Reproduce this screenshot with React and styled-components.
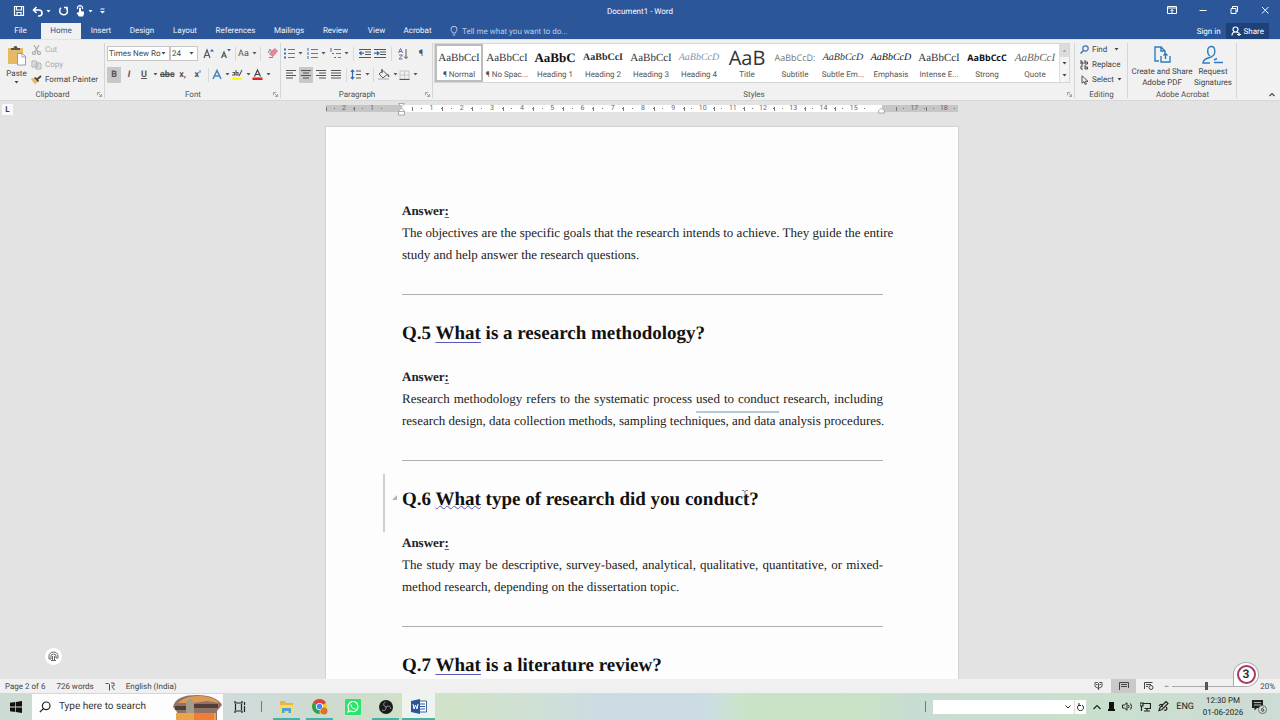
import React from "react";
import styled, { createGlobalStyle, css } from "styled-components";

const ui = 'Roboto, "Open Sans", sans-serif';

const Global = createGlobalStyle`
  * { box-sizing: border-box; }
  body { margin: 0; font-family: ${ui}; font-size: 8px; color: #444; background: #e3e3e3; text-rendering: geometricPrecision; }
  button, input, select { font: inherit; color: inherit; margin: 0; padding: 0; border: 0; background: none; text-rendering: inherit; }
  button { cursor: pointer; white-space: nowrap; }
  svg { display: block; flex: none; fill: none; stroke: currentColor; stroke-width: 1.2; }
  h1, h2, h3, p { margin: 0; }
`;

const Screen = styled.div`
  display: flex; flex-direction: column; height: 100vh; overflow: hidden;
`;

/* title bar and tabs */
const TitleBar = styled.header`
  display: grid; grid-template-columns: 1fr auto 1fr; align-items: center; height: 22px;
  background: #2b579a; color: #fff;
`;
const QuickAccess = styled.div`
  display: flex; align-items: center; gap: 7px; padding-left: 13px;
`;
const QuickButton = styled.button`
  display: flex; align-items: center; gap: 3px; height: 20px;
`;
const DocTitle = styled.h1`
  font-size: 8px; font-weight: 400; line-height: 20px; padding-top: 2px;
`;
const WindowControls = styled.div`
  display: flex; justify-content: flex-end; gap: 21px; padding-right: 10px; padding-bottom: 2px;
  button { display: flex; }
`;
const TabBar = styled.nav`
  display: flex; align-items: flex-end; height: 17px; background: #2b579a; color: #f0f4fa;
`;
const Tab = styled.button`
  height: 16px; width: ${(p) => p.$w}px; line-height: 16px;
  ${(p) => p.$active && css`background: #f1f1f1; color: #2b579a;`}
`;
const TellMe = styled.button`
  display: flex; align-items: center; gap: 4px; height: 16px; padding-left: 11px; color: #b9cae6;
`;
const Account = styled.div`
  display: flex; margin-left: auto; padding-right: 11px; gap: 5px;
`;
const AccountButton = styled.button`
  display: flex; align-items: center; gap: 3px; height: 16px; color: #fff;
  ${(p) => p.$filled && css`background: #1e4178; padding: 0 5px;`}
`;

/* ribbon */
const Ribbon = styled.section`
  display: flex; height: 62px; background: #f1f1f1; border-top: 1px solid #dfe5ee; padding-top: 2px;
  border-bottom: 1px solid #d8d8d8;
`;
const Group = styled.div`
  display: flex; flex-direction: column; position: relative;
  ${(p) => (p.$w ? `flex: none; width: ${p.$w}px;` : "flex: 1; min-width: 0;")}
  &::after { content: ""; position: absolute; right: 0; top: 1px; bottom: 2px; width: 1px; background: #d5d5d5; }
  &:last-child::after { display: none; }
`;
const GroupBody = styled.div`
  flex: 1; display: flex; flex-direction: ${(p) => (p.$column ? "column" : "row")}; min-height: 0;
  padding: ${(p) => (p.$column ? 1 : 0)}px ${(p) => p.$pad ?? 2}px 0;
`;
const GroupLabel = styled.div`
  display: flex; align-items: center; justify-content: center; height: 11px; color: #555;
`;
const Launcher = styled.button`
  position: absolute; right: 3px; bottom: 3px; z-index: 1; color: #777;
`;
const BigButton = styled.button`
  display: flex; flex-direction: column; align-items: center; line-height: 11px; gap: 2px; padding-top: 3px;
  width: ${(p) => p.$w}px; color: #444;
`;
const Stack = styled.div`
  display: flex; flex-direction: column;
`;
const SmallButton = styled.button`
  display: flex; align-items: center; gap: 3px; height: 15px; color: ${(p) => (p.$dim ? "#aaa" : "#444")};
`;
const ToolRow = styled.div`
  display: flex; align-items: center; height: 21px; gap: ${(p) => p.$gap ?? 4}px;
`;
const Tool = styled.button`
  display: flex; align-items: center; justify-content: center; gap: 3px; height: 16px; min-width: ${(p) => (p.$slim ? 7 : 14)}px;
  font-size: 9px; color: #555; font-weight: ${(p) => (p.$bold ? 700 : 400)};
  ${(p) => p.$on && css`background: #c8c8c8;`}
`;
const Divider = styled.span`
  width: 1px; height: 14px; background: #d8d8d8; flex: none; margin: 0 ${(p) => p.$m ?? 0}px;
`;
const FontBox = styled.label`
  display: flex; align-items: center; width: ${(p) => p.$w}px; height: 15px; background: #fff; border: 1px solid #c6c6c6;
  padding: 0 3px 0 1px;
  input { flex: 1; min-width: 0; width: 0; outline: 0; }
`;
const Gallery = styled.div`
  display: flex; flex: 1; min-width: 0; height: 40px; margin: 1px 4px 0 0; background: #fff; border: 1px solid #d6d6d6;
`;
const StyleCard = styled.button`
  flex: 1; min-width: 0; display: flex; flex-direction: column; align-items: center; justify-content: flex-end; overflow: hidden;
  padding-bottom: 1px; color: #555;
  outline: ${(p) => (p.$active ? "2px solid #bcbcbc" : "0")}; outline-offset: -2px;
`;
const Sample = styled.span`
  font: ${(p) => p.$font}; color: ${(p) => p.$color || "#333"}; line-height: 20px; height: 20px;
`;
const StyleName = styled.span`
  line-height: 13px;
`;
const GalleryScroll = styled.div`
  display: flex; flex-direction: column; width: 10px; background: #f4f4f4; border-left: 1px solid #ddd;
  button { flex: 1; display: flex; align-items: center; justify-content: center; }
  button:first-child { background: #dcdcdc; color: #aaa; }
`;
const Collapse = styled.button`
  margin: auto 5px 3px auto;
`;

/* ruler */
const RulerRow = styled.div`
  display: flex; justify-content: center; position: relative; height: 16px; padding: 4px 0 5px 4px; background: #e3e3e3; flex: none;
`;
const TabStop = styled.button`
  position: absolute; left: 2px; top: 3px; width: 11px; height: 11px; background: #fafafa; font-size: 8px; font-weight: 700; line-height: 8px;
`;
const RulerZone = styled.div`
  display: flex; width: ${(p) => p.$w}px; padding: ${(p) => p.$pad}; color: #666;
  background: ${(p) => (p.$margin ? "#c6c6c6" : "#fff")};
`;
const Centimetre = styled.div`
  flex: 1; display: flex; align-items: center; justify-content: space-between; font-size: 7px; line-height: 7px;
  &::before { content: ""; width: 1px; height: 4px; background: #777; }
`;
const Dot = styled.i`
  width: 1px; height: 1px; background: #777;
`;
const Indent = styled.span`
  position: relative; z-index: 1; width: 0;
  svg { position: absolute; left: -4px; top: -2px; }
`;

/* document */
const Workspace = styled.main`
  flex: 1; min-height: 0; overflow: hidden; position: relative; display: flex; justify-content: center;
  padding: 9px 0 0 4px; background: #e3e3e3;
`;
const Page = styled.article`
  width: 634px; height: max-content; padding: 73px 75px 80px 76px; background: #fdfdfd; border: 1px solid #d2d2d2; color: #222;
  font-family: "Liberation Serif", serif; font-size: 13px; line-height: 22px;
`;
const Question = styled.h2`
  position: relative; font-size: 19px; line-height: 24px; margin-bottom: 20px; color: #111;
`;
const Answer = styled.h3`
  font-size: 13px; line-height: 22px; font-weight: 700;
`;
const Line = styled.span`
  display: block; white-space: nowrap; text-align: justify; text-align-last: ${(p) => (p.$full ? "justify" : "left")};
`;
const Rule = styled.hr`
  height: 1px; margin: 28px 0 27px; border: 0; background: #b0b0b0;
`;
const Squiggle = styled.span`
  text-decoration: underline; text-decoration-color: #5a57b8; text-decoration-style: ${(p) => (p.$plain ? "solid" : "wavy")};
  text-decoration-thickness: 1px; text-underline-offset: ${(p) => (p.$plain ? 3 : 0)}px;
`;
const Hint = styled.span`
  text-decoration: underline 2px #b3c8dc; text-underline-offset: 8px;
`;
const Colon = styled.span`
  text-decoration: underline 1px #666; text-underline-offset: 2px;
`;
const HeadingMark = styled.span`
  position: absolute; left: -19px; top: -14px; height: 58px; border-left: 2px solid #cfcfcf;
  svg { position: absolute; left: 7px; top: 21px; fill: #b5b5b5; stroke: none; }
`;
const TextCursor = styled.span`
  position: absolute; left: 340px; top: 2px; color: #555;
`;
const Assistant = styled.button`
  position: absolute; left: 45px; bottom: 14px; width: 17px; height: 17px; border-radius: 50%; background: #fff;
  display: flex; align-items: center; justify-content: center; color: #666;
`;

/* status bar */
const StatusBar = styled.footer`
  position: relative; display: flex; align-items: center; height: 14px; flex: none; padding: 0 5px; background: #f0f0f0; gap: 11px;
`;
const Views = styled.div`
  display: flex; margin-left: auto;
`;
const ViewButton = styled.button`
  display: flex; align-items: center; justify-content: center; width: 25px; height: 14px;
  background: ${(p) => (p.$on ? "#c9c9c9" : "none")};
`;
const Zoom = styled.label`
  display: flex; align-items: center; gap: 3px; width: 111px; margin-left: -8px;
  input { appearance: none; width: 72px; height: 12px; background: linear-gradient(#aaa, #aaa) center / 100% 1px no-repeat; }
  input::-webkit-slider-thumb { appearance: none; width: 3px; height: 8px; background: #555; }
  output { margin-left: auto; }
`;
const Badge = styled.span`
  position: absolute; right: 21px; bottom: 6px; width: 26px; height: 25px; display: flex; align-items: center; justify-content: center;
  background: #fff; border-radius: 50% 50% 50% 0; border: 1px solid #aaa; z-index: 2;
  b { width: 19px; height: 19px; border: 2px solid #a43a62; border-radius: 50%; font-size: 12px; line-height: 15px; text-align: center; color: #333; }
`;

/* taskbar */
const Taskbar = styled.footer`
  display: flex; align-items: center; height: 27px; flex: none; color: #222;
  background: linear-gradient(90deg, #cedbd3 0, #d0dbdb 18%, #cddbd4 24%, #d0dfc9 30%, #d0e3c9 35%, #cfe0d5 42%, #ccdbe3 47%, #ccdce4 55%, #c9e3c8 58%, #c9e2c7 68%, #c8ddd2 71%, #c9e0cc 84%, #cddcd6 100%);
`;
const Start = styled.button`
  width: 32px; display: flex; justify-content: center; color: #111;
`;
const Search = styled.label`
  display: flex; align-items: center; width: 191px; height: 26px; padding-left: 7px; gap: 8px; background: #fdfdfd; font-size: 10px;
  input { flex: 1; min-width: 0; width: 0; outline: 0; }
  input::placeholder { color: #333; opacity: 1; }
`;
const AppButton = styled.button`
  position: relative; display: flex; align-items: center; justify-content: center; width: 33px; height: 27px;
  background: ${(p) => (p.$active ? "#eef3ee" : "none")};
  ${(p) => p.$open && css`
    &::after { content: ""; position: absolute; bottom: 0; left: ${p.$active ? 0 : 3}px; right: ${p.$active ? 0 : 3}px; height: 2px; background: #3fb5a5; }
  `}
`;
const Separator = styled.span`
  width: 1px; height: 11px; background: #777;
`;
const Apps = styled.div`
  display: flex; align-items: center; gap: 5px;
`;
const PinnedApps = styled.div`
  display: flex; padding-left: 3px;
`;
const Tray = styled.div`
  display: flex; align-items: center; margin-left: auto; gap: 7px; padding-right: 13px; font-size: 9px;
`;
const Address = styled.div`
  display: flex; width: 153px; height: 14px; background: #fff;
  input { flex: 1; min-width: 0; width: 0; }
  button { display: flex; align-items: center; justify-content: center; width: 12px; }
  button:last-child { border-left: 1px solid #ddd; }
`;
const Clock = styled.time`
  display: block; width: 44px; text-align: center; line-height: 12px; font-size: 8px; white-space: nowrap;
`;

const Caret = ({ up }) => (
  <svg width="5" height="3" viewBox="0 0 5 3">
    <path d={up ? "M.5 3L2.5 .5L4.500 3Z" : "M.5 0L2.5 2.500L4.500 0Z"} fill="currentColor" stroke="none" />
  </svg>
);
const LauncherIcon = () => (
  <svg width="5" height="5" viewBox="0 0 6 6"><path d="M.5 4V.5H4M2 2l3 3M5.500 2.500v3h-3" strokeWidth=".8" /></svg>
);
const Lines = ({ widths, align = "left" }) => (
  <svg width="10" height="9" viewBox="0 0 10 9">
    {widths.map((w, i) => {
      const x = align === "left" ? 0 : align === "right" ? 10 - w : (10 - w) / 2;
      return <path key={i} d={`M${x} ${i * 2.5 + 0.5}h${w}`} strokeWidth="1" />;
    })}
  </svg>
);
const ListIcon = ({ kind }) => (
  <svg width="11" height="11" viewBox="0 0 11 11">
    <path d={kind === 2 ? "M4 1.500h7M6 5.500h5M8 9.500h3" : "M4 1.500h7M4 5.500h7M4 9.500h7"} strokeWidth="1" stroke="#777" />
    <path d={kind === 2 ? "M0 1h2M2 5.500h2M4 9.500h2M1 2v2" : kind === 1 ? "M1 0v3M1 4v3M1 8v3" : "M0 1.500h2M0 5.500h2M0 9.500h2"} stroke="#3d6fb0" strokeWidth={kind ? 1 : 2} />
  </svg>
);
const IndentIcon = ({ right }) => (
  <svg width="12" height="9" viewBox="0 0 12 9">
    <path d="M0 .5h12M6 3h6M6 5.500h6M0 8.500h12" strokeWidth="1" />
    <path d={right ? "M0 4.200h4.500M3 2.500l2 1.700-2 1.800" : "M.5 4.200H5M2.500 2.500l-2 1.700 2 1.800"} stroke="#2b6cb5" />
  </svg>
);

const tabs = [["Home", 40], ["Insert", 40], ["Design", 42], ["Layout", 44], ["References", 57], ["Mailings", 50], ["Review", 43], ["View", 39], ["Acrobat", 43]];

const cards = [
  ["¶ Normal", '11px "Liberation Serif"', "AaBbCcI"],
  ["¶ No Spac...", '11px "Liberation Serif"', "AaBbCcI"],
  ["Heading 1", 'bold 13px "Liberation Serif"', "AaBbC", "#111"],
  ["Heading 2", 'bold 10px "Liberation Serif"', "AaBbCcI"],
  ["Heading 3", '11px "Liberation Serif"', "AaBbCcI"],
  ["Heading 4", 'italic 10px "Liberation Serif"', "AaBbCcD", "#8496b0"],
  ["Title", '20px "Open Sans"', "AaB"],
  ["Subtitle", '9px "Open Sans"', "AaBbCcD:", "#777"],
  ["Subtle Em...", 'italic 10px "Liberation Serif"', "AaBbCcD"],
  ["Emphasis", 'italic 10px "Liberation Serif"', "AaBbCcD", "#111"],
  ["Intense E...", '11px "Liberation Serif"', "AaBbCcI"],
  ["Strong", 'bold 9px "Open Sans"', "AaBbCcC", "#111"],
  ["Quote", 'italic 11px "Liberation Serif"', "AaBbCcI", "#666"],
];

const sections = [
  {
    n: 5, rest: "is a research methodology?",
    lines: [
      <>Research methodology refers to the systematic process <Hint>used to conduct</Hint> research, including</>,
      "research design, data collection methods, sampling techniques, and data analysis procedures.",
    ],
  },
  {
    n: 6, rest: "type of research did you conduct?", current: true,
    lines: [
      "The study may be descriptive, survey-based, analytical, qualitative, quantitative, or mixed-",
      "method research, depending on the dissertation topic.",
    ],
  },
  { n: 7, rest: "is a literature review?" },
];

const Cm = ({ n }) => <Centimetre><Dot /><span>{n}</span><Dot /></Centimetre>;
const Reply = ({ lines }) => (
  <>
    <Answer>Answer<Colon>:</Colon></Answer>
    <p>{lines.map((line, i) => <Line key={i} $full={i < lines.length - 1}>{line}</Line>)}</p>
  </>
);

function TitleArea() {
  return (
    <>
      <TitleBar>
        <QuickAccess>
          <QuickButton aria-label="Save"><svg width="12" height="12" viewBox="0 0 12 12"><path d="M1.500 1.500h9v9h-9zM3.500 1.500v3.500h5V1.500M4 10.500V7.500h4v3" /></svg></QuickButton>
          <QuickButton aria-label="Undo"><svg width="11" height="11" viewBox="0 0 11 11"><path d="M4.500 1L1.500 4l3 3M2 4h5a2.800 2.800 0 010 6H6" strokeWidth="1.600" /></svg><Caret /></QuickButton>
          <QuickButton aria-label="Redo"><svg width="10" height="10" viewBox="0 0 10 10"><path d="M6 1.500h3v3M8.500 2A4 4 0 113 1.800" strokeWidth="1.500" /></svg></QuickButton>
          <QuickButton aria-label="Touch mode"><svg width="10" height="12" viewBox="0 0 10 12"><path d="M4 7V3.500a1 1 0 012 0V6l3 .8V9l-1 2.500H4L1.500 8z" fill="currentColor" stroke="none" /><path d="M2.500 4A2.600 2.600 0 117.500 4" /></svg><Caret /></QuickButton>
          <QuickButton aria-label="Customize toolbar"><svg width="5" height="6" viewBox="0 0 5 6"><path d="M.5 1h4" strokeWidth="1" /><path d="M0 3h5L2.500 5.500z" fill="currentColor" stroke="none" /></svg></QuickButton>
        </QuickAccess>
        <DocTitle>Document1 - Word</DocTitle>
        <WindowControls>
          <button aria-label="Ribbon display"><svg width="10" height="10" viewBox="0 0 10 10"><path d="M.5 1.500h9v7h-9zM.5 3h9M5 8V4.500M3.500 6L5 4.500 6.500 6" strokeWidth="1" /></svg></button>
          <button aria-label="Minimize"><svg width="10" height="10" viewBox="0 0 10 10"><path d="M1.500 5.500h7" strokeWidth="1" /></svg></button>
          <button aria-label="Restore"><svg width="10" height="10" viewBox="0 0 10 10"><path d="M2 3.500h5v5H2zM3.500 3.500v-2h5v5H7" strokeWidth="1" /></svg></button>
          <button aria-label="Close"><svg width="10" height="10" viewBox="0 0 10 10"><path d="M2 2l6.500 6.500M8.500 2L2 8.500" strokeWidth="1" /></svg></button>
        </WindowControls>
      </TitleBar>
      <TabBar>
        <Tab $w={41}>File</Tab>
        {tabs.map(([t, w]) => <Tab key={t} $w={w} $active={t === "Home"}>{t}</Tab>)}
        <TellMe><svg width="8" height="10" viewBox="0 0 8 10"><path d="M2.500 7C2.500 5.500 1 5 1 3.300a3 3 0 016 0C7 5 5.500 5.500 5.500 7zM2.800 9h2.400" strokeWidth="1" /></svg>Tell me what you want to do...</TellMe>
        <Account>
          <AccountButton>Sign in</AccountButton>
          <AccountButton $filled><svg width="10" height="10" viewBox="0 0 10 10"><path d="M1 9.500C1 7 2.500 6 4.500 6S7 7 7 7M4.500 6a2.500 2.500 0 110-5 2.500 2.500 0 010 5M6 8.500h4M8 6.500v4" /></svg>Share</AccountButton>
        </Account>
      </TabBar>
    </>
  );
}

function RibbonArea() {
  return (
    <Ribbon>
      <Group $w={105}>
        <GroupBody>
          <BigButton $w={29}>
            <svg width="19" height="21" viewBox="0 0 19 21"><path d="M1 3h15v16H1z" fill="#e6b967" stroke="none" /><path d="M4 5V3h2.500a2 2 0 014 0H13v2z" fill="#555" stroke="none" /><path d="M10.500 8.500h5l3 3v8.500h-8z" fill="#fff" stroke="#888" strokeWidth=".8" /><path d="M15 8.500V12h3.500" stroke="#888" strokeWidth=".8" /></svg>
            Paste<Caret />
          </BigButton>
          <Stack>
            <SmallButton $dim><svg width="11" height="10" viewBox="0 0 11 10"><path d="M3 0l4 7M8 0L4 7" /><circle cx="3" cy="8" r="1.500" /><circle cx="8" cy="8" r="1.500" /></svg>Cut</SmallButton>
            <SmallButton $dim><svg width="11" height="10" viewBox="0 0 11 10"><path d="M1 1h4l1 1v5H1zM5 3h4l1 1v5H5zM6.500 5h2M6.500 7h2M2.500 3H4M2.500 5H4" strokeWidth="1" /></svg>Copy</SmallButton>
            <SmallButton><svg width="11" height="10" viewBox="0 0 11 10"><path d="M0 4l4-2 3 4-3 3.500z" fill="#e6b967" stroke="none" /><path d="M4 2.500l3.500 4M6 4.500L10 1" stroke="#444" strokeWidth="1.800" /></svg>Format Painter</SmallButton>
          </Stack>
        </GroupBody>
        <GroupLabel>Clipboard</GroupLabel><Launcher aria-label="Clipboard options"><LauncherIcon /></Launcher>
      </Group>

      <Group $w={176}>
        <GroupBody $column>
          <ToolRow $gap={3}>
            <ToolRow $gap={0}>
              <FontBox $w={63}><input aria-label="Font" defaultValue="Times New Ro" /><Caret /></FontBox>
              <FontBox $w={28}><input aria-label="Font size" defaultValue="24" /><Caret /></FontBox>
            </ToolRow>
            <Tool aria-label="Grow font"><svg width="11" height="11" viewBox="0 0 11 11"><path d="M1 10L4 2l3 8M2.200 7.500h3.600" /><path d="M7 3.500L9 1l2 2.500z" fill="#2b6cb5" stroke="none" /></svg></Tool>
            <Tool aria-label="Shrink font"><svg width="11" height="11" viewBox="0 0 11 11"><path d="M1.500 10L4 4l2.500 6M2.500 8h3" /><path d="M7 1l2 2.500L11 1z" fill="#2b6cb5" stroke="none" /></svg></Tool>
            <Divider />
            <Tool>Aa <Caret /></Tool>
            <Divider $m={1} />
            <Tool aria-label="Clear formatting"><svg width="11" height="11" viewBox="0 0 11 11"><path d="M5 3l3-2.500L10.500 3 6 8.500 2.500 6z" fill="#e58a9b" stroke="#c85a70" strokeWidth=".6" /><path d="M1 5l2-4 1.500 3M2 9.500h4" stroke="#777" strokeWidth=".9" /></svg></Tool>
          </ToolRow>
          <ToolRow $gap={1}>
            <Tool $bold $on>B</Tool>
            <Tool $bold><i>I</i></Tool>
            <Tool $bold><u>U</u></Tool>
            <Tool $slim aria-label="Underline style"><Caret /></Tool>
            <Tool $bold><s>abc</s></Tool>
            <Tool $bold>x,</Tool>
            <Tool $bold>x'</Tool>
            <Divider $m={2} />
            <Tool aria-label="Text effects"><svg width="10" height="11" viewBox="0 0 10 11"><path d="M1 10L5 1.500 9 10M2.800 7h4.400" stroke="#4b86c6" strokeWidth="1.600" /></svg><Caret /></Tool>
            <Tool aria-label="Highlight"><svg width="12" height="11" viewBox="0 0 12 11"><path d="M1 8.500h10v2.500H1z" fill="#ff0" stroke="none" /><path d="M1 6h2.500V3.500H1.500M5 1v5h2V3.500H5M11 1L8 7" stroke="#555" strokeWidth="1.100" /></svg><Caret /></Tool>
            <Tool aria-label="Font colour"><svg width="11" height="11" viewBox="0 0 11 11"><path d="M.5 8.500h10v2.500H.5z" fill="#e02020" stroke="none" /><path d="M2.500 7.500l3-6.500 3 6.500M3.800 5.500h3.500" stroke="#444" strokeWidth="1.200" /></svg><Caret /></Tool>
          </ToolRow>
        </GroupBody>
        <GroupLabel>Font</GroupLabel><Launcher aria-label="Font options"><LauncherIcon /></Launcher>
      </Group>

      <Group $w={152}>
        <GroupBody $column $pad={3}>
          <ToolRow>
            <Tool aria-label="Bullets"><ListIcon kind={0} /><Caret /></Tool>
            <Tool aria-label="Numbering"><ListIcon kind={1} /><Caret /></Tool>
            <Tool aria-label="Multilevel list"><ListIcon kind={2} /><Caret /></Tool>
            <Divider />
            <ToolRow $gap={1}>
              <Tool aria-label="Decrease indent"><IndentIcon /></Tool>
              <Tool aria-label="Increase indent"><IndentIcon right /></Tool>
            </ToolRow>
            <Divider />
            <Tool aria-label="Sort"><svg width="10" height="12" viewBox="0 0 10 12"><path d="M.5 5L2.500.5l2 4.500M1 3.500h3M1 7h3.500L1 11h3.500" stroke="#6a5aa0" strokeWidth=".9" /><path d="M8 1v9.500M6 8.500l2 2 2-2" strokeWidth="1" /></svg></Tool>
            <Tool>¶</Tool>
          </ToolRow>
          <ToolRow $gap={1}>
            <Tool aria-label="Align left"><Lines widths={[10, 7, 10, 7]} /></Tool>
            <Tool $on aria-label="Centre"><Lines widths={[10, 6, 10, 6]} align="center" /></Tool>
            <Tool aria-label="Align right"><Lines widths={[10, 7, 10, 7]} align="right" /></Tool>
            <Tool aria-label="Justify"><Lines widths={[10, 10, 10, 10]} /></Tool>
            <Divider $m={2} />
            <Tool aria-label="Line spacing"><svg width="12" height="11" viewBox="0 0 12 11"><path d="M2.500 1v9M.8 2.800L2.500 1l1.700 1.800M.8 8.200L2.500 10l1.700-1.800" stroke="#2b6cb5" /><path d="M6 2h5M6 5.500h5M6 9h5" strokeWidth="1" /></svg><Caret /></Tool>
            <Divider $m={2} />
            <Tool aria-label="Shading"><svg width="13" height="11" viewBox="0 0 13 11"><path d="M2 5l4-3.500 4 4L6 9z" strokeWidth="1" /><path d="M5 4V0M10.500 5l1.500 3" strokeWidth="1.300" /><path d="M1 10h11" stroke="#ccc" strokeWidth="2" /></svg><Caret /></Tool>
            <Tool aria-label="Borders"><svg width="11" height="10" viewBox="0 0 11 10"><path d="M1 1h9v8H1zM5.500 1v8M1 5h9" stroke="#bbb" strokeWidth=".8" /><path d="M.5 9.500h10" strokeWidth="1" /></svg><Caret /></Tool>
          </ToolRow>
        </GroupBody>
        <GroupLabel>Paragraph</GroupLabel><Launcher aria-label="Paragraph options"><LauncherIcon /></Launcher>
      </Group>

      <Group>
        <GroupBody $pad={1}>
          <Gallery>
            {cards.map(([name, font, text, color], i) => (
              <StyleCard key={name} $active={i === 0}>
                <Sample $font={font} $color={color}>{text}</Sample><StyleName>{name}</StyleName>
              </StyleCard>
            ))}
            <GalleryScroll>
              <button aria-label="Previous styles"><Caret up /></button>
              <button aria-label="Next styles"><Caret /></button>
              <button aria-label="All styles"><Caret /></button>
            </GalleryScroll>
          </Gallery>
        </GroupBody>
        <GroupLabel>Styles</GroupLabel><Launcher aria-label="Styles options"><LauncherIcon /></Launcher>
      </Group>

      <Group $w={53}>
        <GroupBody $pad={5}>
          <Stack>
            <SmallButton><svg width="9" height="9" viewBox="0 0 9 9"><circle cx="5.500" cy="3.500" r="2.700" stroke="#3a75b5" /><path d="M3.500 5.500L.5 8.500" stroke="#3a75b5" strokeWidth="1.500" /></svg>Find&nbsp;&nbsp;<Caret /></SmallButton>
            <SmallButton><svg width="9" height="10" viewBox="0 0 9 10"><path d="M1 0v4h2V2H1M5 0v4h2.500V2H5M3 6H1v3h2M5 5v4h2.500V7H5" strokeWidth="1" /></svg>Replace</SmallButton>
            <SmallButton><svg width="9" height="10" viewBox="0 0 9 10"><path d="M2 .8v7.500l2-1.800 1.200 3 1.300-.5-1.200-2.700H8z" strokeWidth=".9" /></svg>Select<Caret /></SmallButton>
          </Stack>
        </GroupBody>
        <GroupLabel>Editing</GroupLabel>
      </Group>

      <Group $w={109}>
        <GroupBody>
          <BigButton $w={64}>
            <svg width="18" height="19" viewBox="0 0 18 19"><path d="M6 16H2V2h6l4 4v3M8 2v4h4M8 11v6h9v-6M12.500 14V8.500M10.500 10.500l2-2 2 2" stroke="#2f7dc0" strokeWidth="1.400" /></svg>
            <span>Create and Share<br />Adobe PDF</span>
          </BigButton>
          <BigButton $w={38}>
            <svg width="22" height="19" viewBox="0 0 22 19"><path d="M8 11C5 9 4.500 2 9 1.500S14 9 10.500 11c0 2-9.500 1-9.500 7h7M12 17.500h9M12 15l3-1.500" stroke="#2f7dc0" strokeWidth="1.400" /></svg>
            <span>Request<br />Signatures</span>
          </BigButton>
        </GroupBody>
        <GroupLabel>Adobe Acrobat</GroupLabel>
      </Group>
      <Group $w={43}>
        <Collapse aria-label="Collapse ribbon"><svg width="6" height="5" viewBox="0 0 6 5"><path d="M.5 4L3 1.500 5.500 4" /></svg></Collapse>
      </Group>
    </Ribbon>
  );
}

function DocumentArea() {
  return (
    <>
      <RulerRow>
        <TabStop aria-label="Tab stop">L</TabStop>
        <RulerZone $w={76} $margin $pad="0 20px 0 0"><Cm n={2} /><Cm n={1} /></RulerZone>
        <Indent><svg width="8" height="13" viewBox="0 0 8 13"><path d="M.5.5h6L3.500 4zM.5 8L3.500 5l3 3v4h-6zM.5 8.500h6" fill="#fff" stroke="#999" strokeWidth=".8" /></svg></Indent>
        <RulerZone $w={480} $pad="0 17px 0 10px">{Array.from({ length: 15 }, (_, i) => <Cm key={i} n={i + 1} />)}</RulerZone>
        <Indent><svg width="8" height="13" viewBox="0 0 8 13"><path d="M.5 10V8l3-3 3 3v2z" fill="#fff" stroke="#999" strokeWidth=".8" /></svg></Indent>
        <RulerZone $w={76} $margin $pad="0 3px 0 14px"><Cm n={17} /><Cm n={18} /></RulerZone>
      </RulerRow>
      <Workspace>
        <Page>
          <Reply lines={[
            "The objectives are the specific goals that the research intends to achieve. They guide the entire",
            "study and help answer the research questions.",
          ]} />
          {sections.map((s) => (
            <React.Fragment key={s.n}>
              <Rule />
              <Question>
                {s.current && <HeadingMark><svg width="5" height="5" viewBox="0 0 5 5"><path d="M5 0v5H0z" /></svg></HeadingMark>}
                Q.{s.n} <Squiggle $plain={!s.current}>What</Squiggle> {s.rest}
                {s.current && <TextCursor><svg width="6" height="14" viewBox="0 0 6 14"><path d="M0 .5h2l1 1 1-1h2M3 1v12" strokeWidth=".7" /></svg></TextCursor>}
              </Question>
              {s.lines && <Reply lines={s.lines} />}
            </React.Fragment>
          ))}
        </Page>
        <Assistant aria-label="Assistant"><svg width="11" height="11" viewBox="0 0 11 11"><path d="M1 7V5a4.500 4 0 019 0v2H8V5a2.500 2 0 00-5 0v3H1zM4.500 5v4M6.500 5v4M3 9.500h5" strokeWidth="1" /></svg></Assistant>
      </Workspace>
    </>
  );
}

function BottomArea() {
  return (
    <>
      <StatusBar>
        <span>Page 2 of 6</span><span>726 words</span>
        <svg width="10" height="9" viewBox="0 0 10 9"><path d="M.5 1.500h3l1 1v6M4.500 2.500V8M6 1h3v3H6.500M7 5l2.500 3" strokeWidth=".9" /></svg>
        <span>English (India)</span>
        <Views>
          <ViewButton aria-label="Read mode"><svg width="9" height="8" viewBox="0 0 9 8"><path d="M1 .5h2.500l1 1 1-1H8v4L4.500 6.500 1 4.500zM4.500 1.500V8M2 2.500h1.500M5.500 2.500H7" strokeWidth=".9" /></svg></ViewButton>
          <ViewButton $on aria-label="Print layout"><svg width="10" height="8" viewBox="0 0 10 8"><path d="M.5 8V.5h9V6M2 2.500h6M2 4.500h6" strokeWidth="1" /></svg></ViewButton>
          <ViewButton aria-label="Web layout"><svg width="10" height="8" viewBox="0 0 10 8"><path d="M.5 7V.5h8M2 2.500h5M2 4.500h2" strokeWidth="1" /><circle cx="7" cy="5.500" r="2" strokeWidth="1" /></svg></ViewButton>
        </Views>
        <Zoom><span>–</span><input type="range" aria-label="Zoom" min="10" max="210" defaultValue="104" /><output>20%</output></Zoom>
        <Badge><b>3</b></Badge>
      </StatusBar>
      <Taskbar>
        <Start aria-label="Start"><svg width="12" height="12" viewBox="0 0 12 12"><path d="M0 1.800L5.300 1v4.600H0zM6 .9L12 0v5.600H6zM0 6.400h5.300V11L0 10.200zM6 6.400h6V12l-6-.9z" fill="currentColor" stroke="none" /></svg></Start>
        <Search>
          <svg width="12" height="12" viewBox="0 0 12 12"><circle cx="7.200" cy="4.800" r="3.800" /><path d="M4.500 7.500L.8 11.200" /></svg>
          <input placeholder="Type here to search" />
          <svg width="51" height="26" viewBox="0 0 51 26">
            <path d="M1 13C3 4 12 1 25 1s22 4 25 10l-5 6v9H5v-8z" fill="#8f7365" stroke="none" />
            <path d="M6 9C12 3 20 2 27 2c9 0 16 2 20 7l-12-2-13 2z" fill="#dd9a55" stroke="none" />
            <path d="M3 12h14v4H3zM22 10h24v4H22z" fill="#503d3d" stroke="none" />
            <path d="M4 19h40v7H4z" fill="#e9a648" stroke="none" /><path d="M22 19h20v7H22z" fill="#f07d35" stroke="none" />
            <path d="M14 19V8l4-4 4 4v11z" fill="#a59b8c" stroke="none" />
          </svg>
        </Search>
        <Apps>
          <AppButton aria-label="Task view"><svg width="12" height="12" viewBox="0 0 12 12"><path d="M1 0v2h7V0M1 12v-2h7v2M1.500 3v6M7.500 3v6M10.500 1v3M10.500 5v6" stroke="#222" /></svg></AppButton>
          <Separator />
          <PinnedApps>
            <AppButton $open aria-label="File Explorer"><svg width="15" height="14" viewBox="0 0 15 14"><path d="M1 1h5l1 2h7v10H1z" fill="#eab63e" stroke="none" /><path d="M1 5h13v8H1z" fill="#ffd968" stroke="none" /><path d="M3 13V8h9v5H9.500v-2h-4v2z" fill="#4aa3dc" stroke="none" /></svg></AppButton>
            <AppButton $open aria-label="Chrome"><svg width="16" height="16" viewBox="0 0 16 16"><g stroke="none"><circle cx="7.500" cy="7.500" r="7.500" fill="#f6c52d" /><path d="M7.500 7.500L1 3.800A7.500 7.500 0 0114 3.800z" fill="#de4436" /><path d="M7.500 7.500L1 3.800A7.500 7.500 0 007.500 15z" fill="#2da14f" /><circle cx="7.500" cy="7.500" r="3.600" fill="#fff" /><circle cx="7.500" cy="7.500" r="2.700" fill="#4285f4" /><circle cx="12" cy="12" r="3.500" fill="#d5772f" /></g></svg></AppButton>
            <AppButton aria-label="WhatsApp"><svg width="16" height="16" viewBox="0 0 16 16"><rect width="16" height="16" rx="1" fill="#2be56a" stroke="none" /><path d="M3 13l.8-2.800A5 5 0 115.800 12zM6 5.500c0 2.500 2 4.500 4.500 4.500" stroke="#fff" /></svg></AppButton>
            <AppButton $open aria-label="OBS Studio"><svg width="14" height="14" viewBox="0 0 14 14"><circle cx="7" cy="7" r="7" fill="#1b1b1b" stroke="none" /><path d="M7 7C4 6 4 3 6.500 2M7 7c2.500-2 5-.5 4.500 2M7 7c.5 3-2 4.500-4 3" stroke="#999" strokeWidth="1" /></svg></AppButton>
            <AppButton $open $active aria-label="Word"><svg width="16" height="15" viewBox="0 0 16 15"><path d="M8 2h7.500v11H8z" fill="#fff" stroke="#2b579a" strokeWidth=".9" /><path d="M9 5h5M9 7.500h5M9 10h5" stroke="#2b579a" strokeWidth="1" /><path d="M0 2l9-2v15l-9-2z" fill="#2b579a" stroke="none" /><path d="M2 5l1 5 1.500-4L6 10l1-5" stroke="#fff" strokeWidth="1" /></svg></AppButton>
          </PinnedApps>
        </Apps>
        <Tray>
          <Separator />
          <Address><input aria-label="Address" /><button aria-label="Address history"><svg width="6" height="4" viewBox="0 0 6 4"><path d="M.5.5L3 3 5.500.5" strokeWidth="1" /></svg></button><button aria-label="Refresh"><svg width="7" height="8" viewBox="0 0 7 8"><path d="M2 2a3 3 0 103 0M2 0v2.500h2" strokeWidth="1" /></svg></button></Address>
          <svg width="8" height="6" viewBox="0 0 8 6"><path d="M.5 5L4 1.500 7.500 5" /></svg>
          <svg width="7" height="10" viewBox="0 0 7 10"><path d="M1 0h5v7h1v2H0V7h1z" fill="#111" stroke="none" /></svg>
          <svg width="11" height="9" viewBox="0 0 11 9"><path d="M.5 3h1.800L5 .8v7.400L2.300 6H.5zM6.500 3q1.200 1.500 0 3M8.500 1.500q2.200 3 0 6" strokeWidth="1" /></svg>
          <svg width="11" height="10" viewBox="0 0 11 10"><path d="M2.500 1.500h8v5h-6M0 1h3v3H0zM1.500 4v5M4 9h6M7 6.500V9" /></svg>
          <svg width="11" height="11" viewBox="0 0 11 11"><path d="M1 9.500l1-3 6-6L10 2.500 4 8.500zM1 5c2-3 4-1 3 1M6 9c2 1 4-1 2-3" /></svg>
          <span>ENG</span>
          <Clock>12:30 PM<br />01-06-2026</Clock>
          <svg width="15" height="15" viewBox="0 0 15 15"><path d="M0 1h11v8H5l-2.500 2.500V9H0z" fill="#222" stroke="none" /><path d="M2 3.500h7M2 6h7" stroke="#ddd" strokeWidth=".8" /><circle cx="10.500" cy="10.500" r="4" fill="#d5ded9" stroke="#555" strokeWidth=".8" /><path d="M11.500 8.500c-2 .5-2.500 3.500-1 3.800s2-2 .3-2.200" strokeWidth=".9" /></svg>
        </Tray>
      </Taskbar>
    </>
  );
}

export default function App() {
  return (
    <Screen>
      <Global />
      <TitleArea />
      <RibbonArea />
      <DocumentArea />
      <BottomArea />
    </Screen>
  );
}
